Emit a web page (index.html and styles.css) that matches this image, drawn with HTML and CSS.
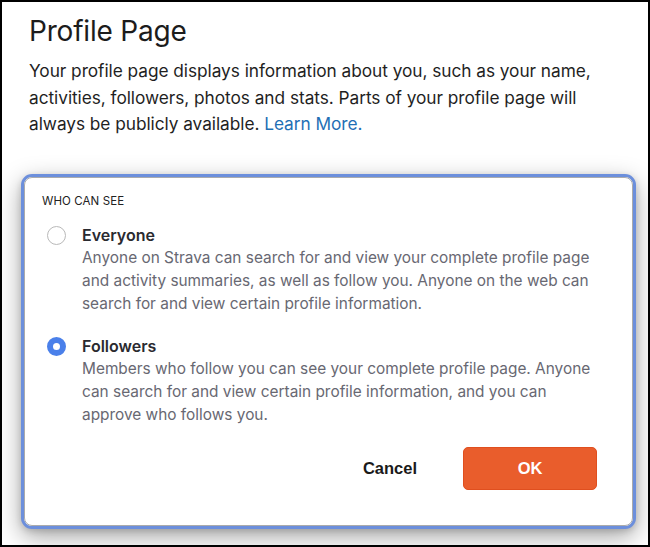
FILE: index.html
```html
<!DOCTYPE html>
<html>
<head>
<meta charset="utf-8">
<link rel="stylesheet" href="styles.css">
</head>
<body>
<div class="frame">
  <h1 class="title">Profile Page</h1>
  <p class="intro">Your profile page displays information about you, such as your name, activities, followers, photos and stats. Parts of your profile page will always be publicly available. <a class="link" href="#">Learn More.</a></p>
  <div class="dialog-ring">
    <div class="dialog">
      <div class="label">WHO CAN SEE</div>
      <div class="option">
        <span class="radio"></span>
        <div class="option-text">
          <div class="option-title">Everyone</div>
          <div class="option-desc">Anyone on Strava can search for and view your complete profile page and activity summaries, as well as follow you. Anyone on the web can search for and view certain profile information.</div>
        </div>
      </div>
      <div class="option">
        <span class="radio checked"></span>
        <div class="option-text">
          <div class="option-title">Followers</div>
          <div class="option-desc">Members who follow you can see your complete profile page. Anyone can search for and view certain profile information, and you can approve who follows you.</div>
        </div>
      </div>
      <div class="actions">
        <button class="btn-cancel">Cancel</button>
        <button class="btn-ok">OK</button>
      </div>
    </div>
  </div>
</div>
</body>
</html>
```

FILE: styles.css
```css
* { box-sizing: border-box; }
html, body { margin: 0; padding: 0; background: #fff; }
body { font-family: Inter, "Noto Sans", sans-serif; }
.frame {
  width: 650px;
  height: 547px;
  border: 2px solid #000;
  overflow: hidden;
  padding: 12px 0 0 27px;
  background: #fff;
}
.title {
  margin: 0;
  font-size: 28px;
  font-weight: 400;
  line-height: 34px;
  color: #1c1c1c;
  letter-spacing: -0.2px;
}
.intro {
  margin: 10px 0 0 0;
  width: 600px;
  font-size: 17.3px;
  line-height: 26.5px;
  color: #1f1f1f;
  letter-spacing: -0.05px;
}
.link { color: #1f6fb5; text-decoration: none; }
.dialog-ring {
  margin: 36px 0 0 -8px;
  width: 615px;
  height: 355px;
  border: 3px solid #6c8fdc;
  border-radius: 11px;
  box-shadow: 0 8px 24px rgba(0,0,0,0.35), 0 2px 6px rgba(0,0,0,0.15);
  background: #fff;
}
.dialog {
  height: 100%;
  border: 1.5px solid #ababab;
  border-radius: 8px;
  padding: 15px 0 0 17px;
  background: #fff;
}
.label {
  font-size: 11.5px;
  color: #222;
  line-height: 16px;
  letter-spacing: 0.1px;
}
.option {
  display: flex;
  margin-top: 15px;
}
.option + .option { margin-top: 20px; }
.radio {
  flex: none;
  width: 19px;
  height: 19px;
  border-radius: 50%;
  border: 1px solid #b9b9b9;
  margin: 2px 16px 0 5px;
  background: #fff;
}
.radio.checked {
  border: 6px solid #4a80ea;
  background: #fff;
}
.option-title {
  font-size: 16px;
  font-weight: 600;
  color: #2a2a30;
  line-height: 22px;
}
.option-desc {
  font-size: 15.4px;
  line-height: 23px;
  color: #686872;
  width: 515px;
}
.actions {
  display: flex;
  justify-content: flex-end;
  align-items: center;
  margin-top: 21px;
  padding-right: 35px;
  gap: 46px;
}
.btn-cancel {
  border: none;
  background: none;
  font-family: "Liberation Sans", Arial, sans-serif;
  font-size: 16.5px;
  font-weight: 700;
  color: #1a1a1a;
  padding: 0;
}
.btn-ok {
  width: 134px;
  height: 43px;
  border: 1px solid #e04f1f;
  border-radius: 5px;
  background: #e95d2c;
  color: #fff;
  font-family: "Liberation Sans", Arial, sans-serif;
  font-size: 16.5px;
  font-weight: 700;
}
```
